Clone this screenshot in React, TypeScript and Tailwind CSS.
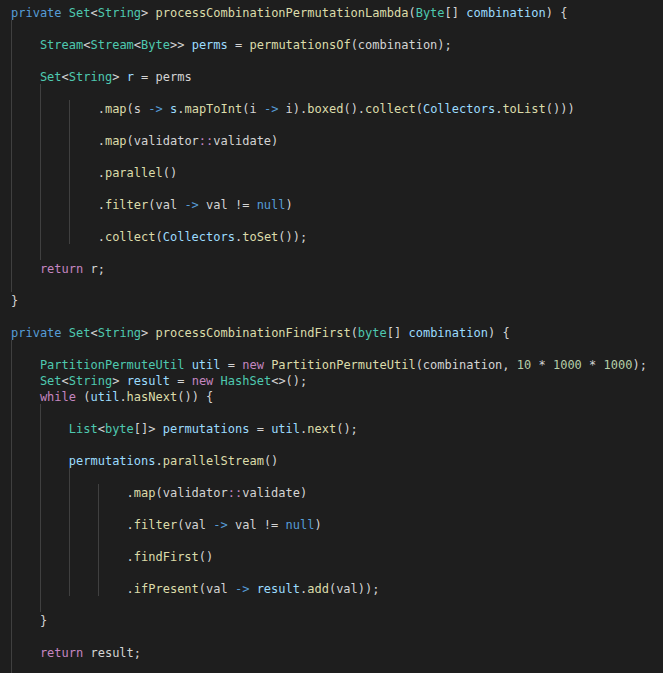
type Tok = [string, string?];
type Row = { g: number; i?: number; t?: Tok[] };

// token colours (vscode dark+)
const K = 'text-[#569cd6]';
const T = 'text-[#4ec9b0]';
const F = 'text-[#dcdcaa]';
const V = 'text-[#9cdcfe]';
const C = 'text-[#c586c0]';
const N = 'text-[#b5cea8]';

const rows: Row[] = [
  { g: 0, t: [['private', K], [' '], ['Set', T], ['<'], ['String', T], ['> '], ['processCombinationPermutationLambda', F], ['('], ['Byte', T], ['[] '], ['combination', V], [') {']] },
  { g: 1 },
  { g: 1, i: 1, t: [['Stream', T], ['<'], ['Stream', T], ['<'], ['Byte', T], ['>> '], ['perms', V], [' = '], ['permutationsOf', F], ['(combination);']] },
  { g: 1 },
  { g: 1, i: 1, t: [['Set', T], ['<'], ['String', T], ['> '], ['r', V], [' = perms']] },
  { g: 2 },
  { g: 3, i: 3, t: [['.'], ['map', F], ['(s '], ['->', K], [' '], ['s', V], ['.'], ['mapToInt', F], ['(i '], ['->', K], [' i).'], ['boxed', F], ['().'], ['collect', F], ['('], ['Collectors', V], ['.'], ['toList', F], ['()))']] },
  { g: 3 },
  { g: 3, i: 3, t: [['.'], ['map', F], ['(validator'], ['::', C], ['validate)']] },
  { g: 3 },
  { g: 3, i: 3, t: [['.'], ['parallel', F], ['()']] },
  { g: 3 },
  { g: 3, i: 3, t: [['.'], ['filter', F], ['(val '], ['->', K], [' val != '], ['null', K], [')']] },
  { g: 3 },
  { g: 3, i: 3, t: [['.'], ['collect', F], ['('], ['Collectors', V], ['.'], ['toSet', F], ['());']] },
  { g: 2 },
  { g: 1, i: 1, t: [['return', C], [' r;']] },
  { g: 1 },
  { g: 0, t: [['}']] },
  { g: 0 },
  { g: 0, t: [['private', K], [' '], ['Set', T], ['<'], ['String', T], ['> '], ['processCombinationFindFirst', F], ['('], ['byte', T], ['[] '], ['combination', V], [') {']] },
  { g: 1 },
  { g: 1, i: 1, t: [['PartitionPermuteUtil', T], [' '], ['util', V], [' = '], ['new', C], [' '], ['PartitionPermuteUtil', F], ['(combination, '], ['10', N], [' * '], ['1000', N], [' * '], ['1000', N], [');']] },
  { g: 1, i: 1, t: [['Set', T], ['<'], ['String', T], ['> '], ['result', V], [' = '], ['new', C], [' '], ['HashSet', T], ['<>();']] },
  { g: 1, i: 1, t: [['while', C], [' ('], ['util', V], ['.'], ['hasNext', F], ['()) {']] },
  { g: 2 },
  { g: 2, i: 2, t: [['List', T], ['<'], ['byte', T], ['[]> '], ['permutations', V], [' = '], ['util', V], ['.'], ['next', F], ['();']] },
  { g: 2 },
  { g: 2, i: 2, t: [['permutations', V], ['.'], ['parallelStream', F], ['()']] },
  { g: 3 },
  { g: 4, i: 4, t: [['.'], ['map', F], ['(validator'], ['::', C], ['validate)']] },
  { g: 4 },
  { g: 4, i: 4, t: [['.'], ['filter', F], ['(val '], ['->', K], [' val != '], ['null', K], [')']] },
  { g: 4 },
  { g: 4, i: 4, t: [['.'], ['findFirst', F], ['()']] },
  { g: 4 },
  { g: 4, i: 4, t: [['.'], ['ifPresent', F], ['(val '], ['->', K], [' '], ['result', V], ['.'], ['add', F], ['(val));']] },
  { g: 2 },
  { g: 1, i: 1, t: [['}']] },
  { g: 1 },
  { g: 1, i: 1, t: [['return', C], [' result;']] },
  { g: 1 },
];

function Line({ row }: { row: Row }) {
  const lead = Math.max(row.g, row.i ?? 0);
  return (
    <div className="flex h-4 items-stretch whitespace-pre">
      {Array.from({ length: lead }).map((_, k) => (
        <span key={k} className={'inline-block w-[4ch] shrink-0 ' + (k < row.g ? 'border-l border-[#404040]' : '')} />
      ))}
      <span className="leading-4 pt-px">
        {row.t?.map(([s, c], k) => (
          <span key={k} className={c ?? 'text-[#d4d4d4]'}>{s}</span>
        ))}
      </span>
    </div>
  );
}

export default function App() {
  return (
    <div className="w-[663px] h-[673px] overflow-hidden bg-[#1e1e1e] pt-1 pl-[11px] text-[12px] text-[#d4d4d4] font-['DejaVu_Sans_Mono',monospace]">
      {rows.map((r, k) => <Line key={k} row={r} />)}
    </div>
  );
}
